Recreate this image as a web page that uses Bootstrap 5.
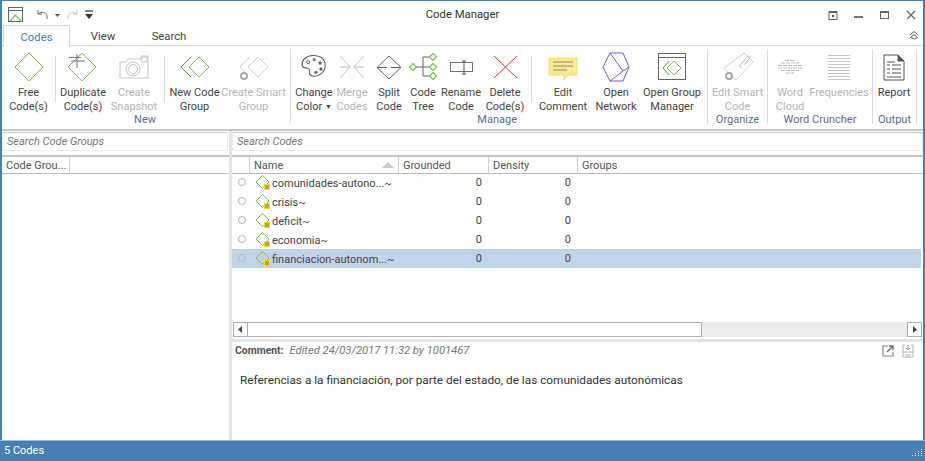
<!DOCTYPE html>
<html lang="en">
<head>
  <meta charset="UTF-8" />
  <meta name="viewport" content="width=device-width, initial-scale=1.0" />
  <title>Code Manager</title>
  <link href="https://cdn.jsdelivr.net/npm/bootstrap@5.3.0/dist/css/bootstrap.min.css" rel="stylesheet">
  <style>
    html, body { height: 100%; }
    body {
      font-family: Roboto, "Noto Sans", sans-serif;
      font-size: 11px;
      line-height: 14px;
      color: #444;
      background: #fff;
      overflow: hidden;
    }
    .app-window {
      width: 925px;
      height: 461px;
      border: solid #4a7fb5;
      border-width: 1px 2px 0 2px;
    }
    .title-bar { display: grid; grid-template-columns: 1fr auto 1fr; height: 24px; align-items: center; padding-top: 3px; }
    .qat { padding-left: 5px; }
    .qat-undo { margin-left: 11px; }
    .app-title { color: #333; font-size: 11.3px; }
    .win-btns { justify-content: flex-end; padding-right: 5px; gap: 12px; }
    .tab-strip { height: 21px; border-bottom: 1px solid #d8d8d8; }
    .rb-tab { width: 66px; height: 21px; text-align: center; line-height: 23px; font-size: 11.3px; }
    .rb-tab-on { color: #3f7cb8; background: #fff; border: 1px solid #d8d8d8; border-bottom: 0; margin-left: 1px; height: 22px; width: 67px; }
    .rb-collapse { margin-left: auto; padding-right: 3px; }
    .ribbon { height: 85px; border-bottom: 2px solid #c8c8c8; }
    .rb-group { height: 82px; flex: none; }
    .rb-tools { height: 67px; }
    .rb-sep { width: 1px; height: 75px; background: #dcdcdc; margin-top: 3px; flex: none; }
    .rb-sep-in { height: 46px; margin-top: 10px; }
    .rb-tool { flex: none; display: flex; flex-direction: column; align-items: center; padding-top: 5px; white-space: nowrap; text-align: center; }
    .rb-tool svg { display: block; flex: none; height: 32px; width: 36px; margin-bottom: 3px; }
    .rb-tool > span { flex: none; }
    .rb-off { color: #b4b4b4; }
    .rb-drop { font-size: 7px; vertical-align: 1px; }
    .rb-label { color: #5b6f8c; white-space: nowrap; margin-top: auto; padding-bottom: 1px; }
    .lb-new { padding-right: 134px; text-align: right; }
    .lb-manage { padding-right: 190px; text-align: right; }
    .lb-mid { text-align: center; }
    .g-new { width: 288px; } .g-manage { width: 416px; } .g-org { width: 59px; } .g-word { width: 104px; } .g-out { width: 43px; }
    .pad6 { margin-right: 6px; } .pad8 { margin-right: 8px; }
    .w24 { width: 24px; } .w30 { width: 30px; } .w36 { width: 36px; } .w42 { width: 42px; }
    .w44 { width: 44px; } .w46 { width: 46px; } .w48 { width: 48px; } .w52 { width: 52px; } .w53 { width: 53px; }
    .w54 { width: 54px; } .w59 { width: 59px; } .w62 { width: 62px; } .w68 { width: 68px; }
    .main-area { min-height: 0; }
    .left-pane { width: 227px; flex: none; }
    .v-split { width: 3px; flex: none; background: #e4e4e4; }
    .search-box {
      height: 19px;
      margin-top: 1px;
      margin-right: 1px;
      border: 1px solid #e6eef6;
      border-top-color: #c8c8c8;
      font-style: italic;
      color: #777;
      padding: 2px 4px 0;
      background: #fff;
    }
    .head-row {
      height: 19px;
      margin-top: 4px;
      border-top: 2px solid #c4c4c4;
      border-bottom: 1px solid #bdbdbd;
      display: flex;
      color: #555;
      line-height: 18px;
    }
    .head-cell { border-right: 1px solid #d0d0d0; padding-left: 4px; flex: none; position: relative; white-space: nowrap; overflow: hidden; }
    .sort-mark { position: absolute; right: 4px; top: 5px; width: 0; height: 0; border: solid transparent; border-width: 0 6px 6px; border-bottom-color: #c6ccd4; }
    .cw0 { width: 18px; padding: 0; } .cw1 { width: 149px; } .cw2 { width: 90px; } .cw3 { width: 89px; }
    .cg1 { width: 68px; }
    .code-rows { height: 148px; flex: none; }
    .code-table { table-layout: fixed; width: 689px; margin: 0; --bs-table-bg: transparent; margin-top: -1px; }
    .code-table td { padding: 0; height: 19px; border: 0; color: #444; vertical-align: middle; line-height: 14px; white-space: nowrap; }
    .code-table tr.row-on td { background: #c2d3e8; box-shadow: none; }
    .dot-cell { text-align: center; }
    .row-dot { display: inline-block; width: 8px; height: 8px; border: 1px solid #b4b4b4; border-radius: 50%; margin-left: 2px; background: #fff; }
    .row-on .row-dot { background: transparent; }
    .num-cell { text-align: right; padding-right: 7px !important; }
    .row-ico { width: 18px; height: 18px; vertical-align: -5px; margin-left: 4px; }
    .h-scroll { height: 15px; margin: 0 1px; background: #ececec; }
    .sb-btn { width: 15px; height: 15px; background: #fff; border: 1px solid #adadad; flex: none; display: flex; align-items: center; justify-content: center; }
    .sb-thumb { width: 454px; height: 15px; background: #fff; border: 1px solid #adadad; border-left: 0; flex: none; }
    .h-split { height: 3px; background: #e4e4e4; margin-top: 2px; }
    .comment-head { height: 22px; padding: 0 4px 4px 3px; align-items: center; }
    .comment-tag { font-weight: 700; color: #555; margin-right: 6px; font-size: 10.4px; }
    .comment-meta { font-style: italic; color: #777; font-size: 11.2px; }
    .comment-save { margin: 0 4px 0 6px; }
    .comment-body { padding: 9px 8px; color: #333; font-size: 11.8px; }
    .status-bar { height: 21px; flex: none; background: #4a7fb5; border-top: 1px solid #9dbcdb; color: #fff; padding-left: 4px; margin: 0 -2px; line-height: 20px; position: relative; }
    .grip { position: absolute; right: 2px; bottom: 2px; }
  </style>
</head>
<body>
  <svg width="0" height="0" class="position-absolute">
    <symbol id="code-ico" viewBox="0 0 18 18">
      <path d="M8.500 1.500 15 8 8.500 14.500 2 8Z" fill="none" stroke="#79bf55" />
      <rect x="10" y="10" width="6" height="6" fill="#f5dd1a" />
      <path d="M11 12h4M11 14h4" stroke="#555" stroke-width=".8" />
    </symbol>
  </svg>

  <div class="app-window d-flex flex-column">
    <div class="title-bar">
      <div class="qat d-flex align-items-center">
        <svg width="18" height="18" viewBox="0 0 18 18"><rect x="1.500" y="1.500" width="14" height="14" fill="#fff" stroke="#666" /><path d="M1.500 4.500h14" stroke="#666" /><path d="M3 15 8.500 9 14 15" fill="none" stroke="#79bf55" stroke-width="1.300" /></svg>
        <svg class="qat-undo" width="14" height="14" viewBox="0 0 14 14"><path d="M2 2v4h4M2.500 6C5 3 10 4 11 8l0 3" fill="none" stroke="#666" /></svg>
        <svg class="ms-1" width="7" height="14" viewBox="0 0 7 14"><path d="M1 6h5L3.500 9Z" fill="#555" /></svg>
        <svg class="ms-1" width="14" height="14" viewBox="0 0 14 14"><path d="M12 2v4H8M11.500 6C9 3 4 4 3 8l0 3" fill="none" stroke="#c4c4c4" /></svg>
        <svg class="ms-1" width="12" height="14" viewBox="0 0 12 14"><path d="M2 3h8" stroke="#333" stroke-width="1.200" /><path d="M2 6h8L6 11Z" fill="#333" /></svg>
      </div>
      <div class="app-title">Code Manager</div>
      <div class="win-btns d-flex align-items-center">
        <svg width="14" height="14" viewBox="0 0 14 14"><rect x="3" y="3.500" width="8" height="8" fill="none" stroke="#666" /><rect x="3" y="3" width="8" height="2" fill="#666" /><rect x="6" y="7" width="2" height="2" fill="#555" /></svg>
        <svg width="14" height="14" viewBox="0 0 14 14"><rect x="2" y="8" width="9" height="2" fill="#777" /></svg>
        <svg width="14" height="14" viewBox="0 0 14 14"><rect x="2.500" y="3.500" width="8" height="7" fill="none" stroke="#666" /><rect x="2" y="3" width="9" height="2" fill="#666" /></svg>
        <svg width="14" height="14" viewBox="0 0 14 14"><path d="M3 3l8 8M11 3l-8 8" stroke="#666" stroke-width="1.100" /></svg>
      </div>
    </div>

    <div class="tab-strip d-flex">
      <div class="rb-tab rb-tab-on">Codes</div>
      <div class="rb-tab">View</div>
      <div class="rb-tab">Search</div>
      <div class="rb-collapse d-flex align-items-center">
        <svg width="12" height="12" viewBox="0 0 12 12"><path d="M2 6 6 2.500 10 6M2.500 8.500 6 5.500 9.500 8.500 6 10Z" fill="none" stroke="#555" /></svg>
      </div>
    </div>

    <div class="ribbon d-flex">
      <div class="rb-group g-new d-flex flex-column">
        <div class="rb-tools d-flex">
          <div class="rb-tool w53">
            <svg viewBox="0 0 36 32"><path d="M18 2 32 16 18 30 4 16Z" fill="none" stroke="#79bf55" /></svg>
            <span>Free</span><span>Code(s)</span>
          </div>
          <div class="rb-sep rb-sep-in"></div>
          <div class="rb-tool w54">
            <svg viewBox="0 0 36 32"><path d="M17 2 31 16 17 30 3 16Z" fill="none" stroke="#79bf55" /><path d="M12 3v14M4 6.500h12M6 10h14" stroke="#777" /></svg>
            <span>Duplicate</span><span>Code(s)</span>
          </div>
          <div class="rb-tool w48 pad6 rb-off">
            <svg viewBox="0 0 36 32"><path d="M4 11h6l2-3h13V5h7v22H4Z" fill="none" stroke="#c4c4c4" /><circle cx="17" cy="18" r="7" fill="none" stroke="#c4c4c4" /><circle cx="17" cy="18" r="4.500" fill="none" stroke="#c4c4c4" /><rect x="26" y="6" width="5" height="5" fill="none" stroke="#c4c4c4" /></svg>
            <span>Create</span><span>Snapshot</span>
          </div>
          <div class="rb-sep rb-sep-in"></div>
          <div class="rb-tool w59">
            <svg viewBox="0 0 36 32"><path d="M14 6 4 16 14 26" fill="none" stroke="#5c9a3e" /><path d="M22 6 32 16 22 26 12 16Z" fill="none" stroke="#79bf55" /></svg>
            <span>New Code</span><span>Group</span>
          </div>
          <div class="rb-tool w59 rb-off">
            <svg viewBox="0 0 36 32"><path d="M14 6 4 16 9 21M22 6 32 16 22 26 12 16Z" fill="none" stroke="#d2d2d2" /><circle cx="8" cy="25" r="3" fill="none" stroke="#aaa" stroke-width="2" /></svg>
            <span>Create Smart</span><span>Group</span>
          </div>
        </div>
        <div class="rb-label lb-new">New</div>
      </div>
      <div class="rb-sep"></div>
      <div class="rb-group g-manage d-flex flex-column">
        <div class="rb-tools d-flex">
          <div class="rb-tool w46">
            <svg viewBox="0 0 36 32"><g transform="translate(2 1) scale(.85)"><path d="M18 4C8 4 4 11 5 16c1 4 6 2 8 4 2 3-2 6 3 8 8 2 16-4 16-12S26 4 18 4Z" fill="none" stroke="#555" stroke-width="1.200" /><circle cx="12" cy="12" r="1.800" fill="none" stroke="#555" /><circle cx="19" cy="9" r="1.800" fill="#777" /><circle cx="26" cy="13" r="2" fill="#666" /><circle cx="27" cy="20" r="2" fill="#666" /><circle cx="21" cy="24" r="2" fill="#777" /></g></svg>
            <span>Change</span><span>Color <span class="rb-drop">▼</span></span>
          </div>
          <div class="rb-tool w30 rb-off">
            <svg viewBox="0 0 36 32"><path d="M6 5 16 16 6 27M30 5 20 16 30 27M6 16h9M21 16h9" fill="none" stroke="#c4c4c4" /></svg>
            <span>Merge</span><span>Codes</span>
          </div>
          <div class="rb-tool w44">
            <svg viewBox="0 0 36 32"><path d="M18 5 30 16.500 18 28 6 16.500Z" fill="none" stroke="#666" /><path d="M6 16.500h10M20 16.500h10" stroke="#666" /></svg>
            <span>Split</span><span>Code</span>
          </div>
          <div class="rb-tool w24">
            <svg viewBox="0 0 36 32"><path d="M11 16h14M18 6v19M18 6h7M18 25h7" fill="none" stroke="#666" /><path d="M8 12.500 11.500 16 8 19.500 4.500 16ZM28 2.500 31.500 6 28 9.500 24.500 6ZM28 12.500 31.500 16 28 19.500 24.500 16ZM28 21.500 31.500 25 28 28.500 24.500 25Z" fill="none" stroke="#79bf55" stroke-width="1.200" /></svg>
            <span>Code</span><span>Tree</span>
          </div>
          <div class="rb-tool w52">
            <svg viewBox="0 0 36 32"><rect x="7.500" y="11.500" width="22" height="9" fill="none" stroke="#777" /><path d="M21 10v13M19 10h4M19 23h4" fill="none" stroke="#555" /></svg>
            <span>Rename</span><span>Code</span>
          </div>
          <div class="rb-tool w36 pad8">
            <svg viewBox="0 0 36 32"><path d="M7 5 30 27M30 5 7 27" stroke="#ef2b2b" /></svg>
            <span>Delete</span><span>Code(s)</span>
          </div>
          <div class="rb-sep rb-sep-in"></div>
          <div class="rb-tool w62">
            <svg viewBox="0 0 36 32"><path d="M4 7h28v17H23l-4 5v-5H4Z" fill="#fbeb8d" stroke="#f3e27a" /><path d="M8 11h20M8 15h20M8 19h14" stroke="#888" /></svg>
            <span>Edit</span><span>Comment</span>
          </div>
          <div class="rb-tool w44">
            <svg viewBox="0 0 36 32"><path d="M12 2h13l6 14-6 14H12L5 16Z" fill="none" stroke="#7e5bb5" /><path d="M12 2 25 20 12 30M25 20l6-4" fill="none" stroke="#7e5bb5" /></svg>
            <span>Open</span><span>Network</span>
          </div>
          <div class="rb-tool w68">
            <svg viewBox="0 0 36 32"><rect x="4.500" y="2.500" width="27" height="26" fill="none" stroke="#666" /><path d="M4.500 6.500h27" stroke="#666" /><path d="M15 10 9 17 15 24" fill="none" stroke="#5c9a3e" /><path d="M20 10 27 17 20 24 13 17Z" fill="none" stroke="#79bf55" /></svg>
            <span>Open Group</span><span>Manager</span>
          </div>
        </div>
        <div class="rb-label lb-manage">Manage</div>
      </div>
      <div class="rb-sep"></div>
      <div class="rb-group g-org d-flex flex-column">
        <div class="rb-tools d-flex">
          <div class="rb-tool w59 rb-off">
            <svg viewBox="0 0 36 32"><path d="M24 2 33 11 16 29 4 17Z" fill="none" stroke="#d2d2d2" /><path d="M24 14l5-6c2-2 0-4-2-2l-7 8c-1 2 1 3 2 2" fill="none" stroke="#bbb" /><circle cx="9" cy="25" r="3" fill="none" stroke="#aaa" stroke-width="2" /></svg>
            <span>Edit Smart</span><span>Code</span>
          </div>
        </div>
        <div class="rb-label lb-mid">Organize</div>
      </div>
      <div class="rb-sep"></div>
      <div class="rb-group g-word d-flex flex-column">
        <div class="rb-tools d-flex">
          <div class="rb-tool w44 rb-off">
            <svg viewBox="0 0 36 32"><path d="M13 9.500h9M9 12h18M6 14.500h24M6 17h24M9 19.500h18M14 22h8" stroke="#bbb" stroke-dasharray="4 1" /></svg>
            <span>Word</span><span>Cloud</span>
          </div>
          <div class="rb-tool w54 rb-off">
            <svg viewBox="0 0 36 32"><path d="M7 4.500h22M7 7.500h22M7 10.500h22M7 13.500h22M7 16.500h22M7 19.500h22M7 22.500h22M7 25.500h22M7 28.500h22" stroke="#c6c6c6" /></svg>
            <span>Frequencies</span>
          </div>
        </div>
        <div class="rb-label lb-mid">Word Cruncher</div>
      </div>
      <div class="rb-sep"></div>
      <div class="rb-group g-out d-flex flex-column">
        <div class="rb-tools d-flex">
          <div class="rb-tool w42">
            <svg viewBox="0 0 36 32"><path d="M8 4h14l6 6v19H8Z" fill="none" stroke="#555" /><path d="M22 4v6h6" fill="#555" stroke="#555" /><path d="M11 11h8M11 14h3M16 14h9M11 18h3M16 18h9M11 22h3M16 22h9M11 26h14" stroke="#555" /></svg>
            <span>Report</span>
          </div>
        </div>
        <div class="rb-label lb-mid">Output</div>
      </div>
      <div class="rb-sep"></div>
    </div>

    <div class="main-area d-flex flex-fill">
      <div class="left-pane d-flex flex-column">
        <div class="search-box">Search Code Groups</div>
        <div class="head-row">
          <div class="head-cell cg1">Code Grou...</div>
        </div>
      </div>
      <div class="v-split"></div>
      <div class="flex-fill d-flex flex-column">
        <div class="search-box me-0">Search Codes</div>
        <div class="head-row">
          <div class="head-cell cw0"></div>
          <div class="head-cell cw1">Name<span class="sort-mark"></span></div>
          <div class="head-cell cw2">Grounded</div>
          <div class="head-cell cw3">Density</div>
          <div class="head-cell border-0">Groups</div>
        </div>
        <div class="code-rows">
          <table class="table code-table">
            <colgroup><col class="cw0"><col class="cw1"><col class="cw2"><col class="cw3"><col></colgroup>
            <tbody>
              <tr><td class="dot-cell"><span class="row-dot"></span></td><td><svg class="row-ico"><use href="#code-ico" /></svg>comunidades-autono...~</td><td class="num-cell">0</td><td class="num-cell">0</td><td></td></tr>
              <tr><td class="dot-cell"><span class="row-dot"></span></td><td><svg class="row-ico"><use href="#code-ico" /></svg>crisis~</td><td class="num-cell">0</td><td class="num-cell">0</td><td></td></tr>
              <tr><td class="dot-cell"><span class="row-dot"></span></td><td><svg class="row-ico"><use href="#code-ico" /></svg>deficit~</td><td class="num-cell">0</td><td class="num-cell">0</td><td></td></tr>
              <tr><td class="dot-cell"><span class="row-dot"></span></td><td><svg class="row-ico"><use href="#code-ico" /></svg>economia~</td><td class="num-cell">0</td><td class="num-cell">0</td><td></td></tr>
              <tr class="row-on"><td class="dot-cell"><span class="row-dot"></span></td><td><svg class="row-ico"><use href="#code-ico" /></svg>financiacion-autonom...~</td><td class="num-cell">0</td><td class="num-cell">0</td><td></td></tr>
            </tbody>
          </table>
        </div>
        <div class="h-scroll d-flex">
          <div class="sb-btn"><svg width="5" height="7" viewBox="0 0 5 7"><path d="M4 0v7L0 3.500Z" fill="#444" /></svg></div>
          <div class="sb-thumb"></div>
          <div class="sb-btn ms-auto"><svg width="5" height="7" viewBox="0 0 5 7"><path d="M1 0v7l4-3.500Z" fill="#444" /></svg></div>
        </div>
        <div class="h-split"></div>
        <div class="comment-head d-flex">
          <span class="comment-tag">Comment:</span>
          <span class="comment-meta">Edited 24/03/2017 11:32 by 1001467</span>
          <svg class="ms-auto" width="14" height="14" viewBox="0 0 14 14"><path d="M7 2H2v10h10V8" fill="none" stroke="#888" stroke-width="1.200" /><path d="M6 8 12 2M8 2h4v4" fill="none" stroke="#666" stroke-width="1.300" /></svg>
          <svg class="comment-save" width="14" height="14" viewBox="0 0 14 14"><path d="M4 1H2v12h10V1h-2M2 8h10M4 11h6" fill="none" stroke="#b4b4b4" /><path d="M7 1v5M5 4l2 2 2-2" fill="none" stroke="#999" /></svg>
        </div>
        <div class="comment-body">Referencias a la financiación, por parte del estado, de las comunidades autonómicas</div>
      </div>
    </div>

    <div class="status-bar">
      5 Codes
      <svg class="grip" width="11" height="11" viewBox="0 0 11 11"><path d="M9 1h1v1H9zM9 3h1v1H9zM6 3h1v1H6zM9 5h1v1H9zM6 5h1v1H6zM3 5h1v1H3zM9 7h1v1H9zM6 7h1v1H6zM3 7h1v1H3zM0 7h1v1H0z" fill="#dbe6f1" /></svg>
    </div>
  </div>
</body>
</html>
